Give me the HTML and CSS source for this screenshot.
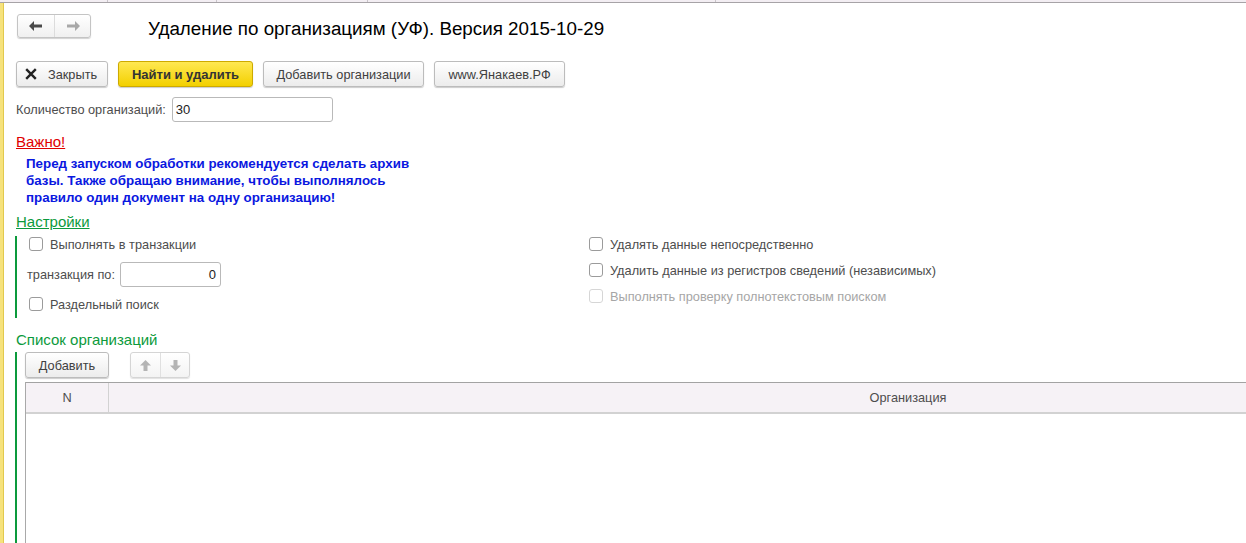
FILE: index.html
```html
<!DOCTYPE html>
<html lang="ru">
<head>
<meta charset="utf-8">
<title>Удаление по организациям</title>
<link rel="stylesheet" href="styles.css">
</head>
<body>
<div class="tabs">
  <div class="tab t1"></div><div class="tab t2"></div><div class="tab t3"></div><div class="tab t4"></div><div class="tab t5"></div>
</div>
<div class="page">
  <div class="edge"></div>
  <div class="content">
    <div class="head">
      <div class="nav">
        <span class="nav-btn"><svg width="14" height="10" viewBox="0 0 14 10"><path d="M0 5 L5 0 L5 3.5 L13 3.5 L13 6.5 L5 6.5 L5 10 Z" fill="#4a4a4a"/></svg></span>
        <span class="nav-btn"><svg width="14" height="10" viewBox="0 0 14 10"><path d="M14 5 L9 0 L9 3.5 L1 3.5 L1 6.5 L9 6.5 L9 10 Z" fill="#a8a8a8"/></svg></span>
      </div>
      <h1 class="title">Удаление по организациям (УФ). Версия 2015-10-29</h1>
    </div>

    <div class="toolbar">
      <button class="btn btn-close"><svg width="12" height="12" viewBox="0 0 12 12"><path d="M1.2 1.2 L10.8 10.8 M10.8 1.2 L1.2 10.8" stroke="#222" stroke-width="2.4"/></svg>Закрыть</button>
      <button class="btn btn-main">Найти и удалить</button>
      <button class="btn btn-add">Добавить организации</button>
      <button class="btn btn-site">www.Янакаев.РФ</button>
    </div>

    <div class="field-row">
      <span class="label">Количество организаций:</span>
      <div class="input input-qty">30</div>
    </div>

    <div class="important">Важно!</div>
    <div class="warn">Перед запуском обработки рекомендуется сделать архив<br>базы. Также обращаю внимание, чтобы выполнялось<br>правило один документ на одну организацию!</div>

    <div class="group-title underlined">Настройки</div>
    <div class="group settings">
      <div class="col col-left">
        <label class="check"><span class="box"></span>Выполнять в транзакции</label>
        <div class="field-row tx">
          <span class="label">транзакция по:</span>
          <div class="input input-tx">0</div>
        </div>
        <label class="check"><span class="box"></span>Раздельный поиск</label>
      </div>
      <div class="col col-right">
        <label class="check"><span class="box"></span>Удалять данные непосредственно</label>
        <label class="check"><span class="box"></span>Удалить данные из регистров сведений (независимых)</label>
        <label class="check disabled"><span class="box"></span>Выполнять проверку полнотекстовым поиском</label>
      </div>
    </div>

    <div class="group-title list-title">Список организаций</div>
    <div class="group list">
      <div class="list-bar">
        <button class="btn btn-add-row">Добавить</button>
        <div class="updown">
          <span class="ud-btn"><svg width="11" height="11" viewBox="0 0 11 11"><path d="M5.5 0 L11 5.5 L7.5 5.5 L7.5 11 L3.5 11 L3.5 5.5 L0 5.5 Z" fill="#b4b4b4"/></svg></span>
          <span class="ud-btn"><svg width="11" height="11" viewBox="0 0 11 11"><path d="M5.5 11 L11 5.5 L7.5 5.5 L7.5 0 L3.5 0 L3.5 5.5 L0 5.5 Z" fill="#b4b4b4"/></svg></span>
        </div>
      </div>
      <div class="table">
        <div class="thead">
          <div class="th th-n">N</div>
          <div class="th th-org">Организация</div>
        </div>
        <div class="tbody"></div>
      </div>
    </div>
  </div>
</div>
</body>
</html>
```

FILE: styles.css
```css
* { box-sizing: border-box; }
html, body { margin: 0; padding: 0; height: 100%; overflow: hidden; background: #fff; }
body {
  font-family: "Liberation Sans", Arial, sans-serif;
  font-size: 12.75px;
  color: #4d4d4d;
}
.tabs {
  display: flex;
  height: 3px;
  background: #f3eef3;
  border-bottom: 1px solid #a7a3a7;
}
.tab { height: 2px; border-right: 1px solid #c9c4c9; }
.t1 { width: 108px; }
.t2 { width: 109px; }
.t3 { width: 151px; }
.t4 { width: 348px; }
.t5 { flex: 1; border-right: none; }

.page { display: flex; height: calc(100% - 3px); }
.edge {
  width: 4px;
  background: #f6e27c;
  border-right: 1px solid #e2c94d;
  flex: none;
}
.content { flex: 1; padding-left: 12px; min-width: 0; overflow: hidden; }

.head { display: flex; align-items: center; margin-top: 11px; height: 24px; }
.nav {
  display: flex;
  margin-left: 1px;
  border: 1px solid #c4c4c4;
  border-radius: 3px;
  box-shadow: 0 1px 1px rgba(0,0,0,0.18);
  background: linear-gradient(#ffffff, #f0f0f0);
}
.nav-btn {
  width: 36px; height: 22px;
  display: flex; align-items: center; justify-content: center;
}
.nav-btn + .nav-btn { border-left: 1px solid #dcdcdc; }
.title {
  margin: 5px 0 0 57px;
  font-size: 18.8px;
  font-weight: normal;
  color: #000;
  white-space: nowrap;
  font-family: "Liberation Sans", Arial, sans-serif;
}

.toolbar { display: flex; gap: 10px; margin-top: 23px; height: 26px; }
.btn {
  font-family: "Liberation Sans", Arial, sans-serif;
  font-size: 12.75px;
  color: #404040;
  height: 26px;
  padding: 0 6px;
  white-space: nowrap;
  border: 1px solid #bcbcbc;
  border-radius: 3px;
  background: linear-gradient(#ffffff, #ececec);
  box-shadow: 0 1px 1px rgba(0,0,0,0.2);
  display: inline-flex; align-items: center; justify-content: center;
}
.btn-close { width: 92px; gap: 11px; justify-content: flex-start; padding-left: 8px; }
.btn-main {
  width: 135px;
  font-weight: bold;
  font-size: 13px;
  color: #333;
  background: linear-gradient(#ffe852, #f3d000);
  border-color: #cdaa00;
}
.btn-add { width: 161px; }
.btn-site { width: 131px; }

.field-row { display: flex; align-items: center; gap: 6px; margin-top: 10px; }
.label { color: #4d4d4d; }
.input {
  height: 25px;
  border: 1px solid #b9b9b9;
  border-radius: 3px;
  background: #fff;
  color: #222;
  padding: 0 3px;
  display: flex; align-items: center;
  font-size: 13px;
}
.input-qty { width: 161px; }

.important {
  margin-top: 11px;
  font-size: 15px;
  line-height: 18px;
  color: #e00000;
  text-decoration: underline;
  display: inline-block;
}
.warn {
  margin: 4px 0 0 10px;
  font-weight: bold;
  color: #0a18e0;
  font-size: 13.35px;
  line-height: 17px;
  white-space: nowrap;
}
.group-title {
  font-size: 15px;
  line-height: 18px;
  color: #0c9a3c;
  margin-top: 7px;
  display: inline-block;
}
.group-title.underlined { text-decoration: underline; }
.group { border-left: 2px solid #0c9a3c; margin-left: -1px; }
.settings {
  display: flex;
  margin-top: 5px;
  padding: 1px 0 7px 10px;
}
.col { display: flex; flex-direction: column; }
.col-left { width: 562px; }
.check {
  display: flex; align-items: center; gap: 7px;
  color: #4d4d4d;
  height: 14px;
  white-space: nowrap;
}
.box {
  width: 14px; height: 14px;
  border: 1px solid #9b9b9b;
  border-radius: 3px;
  background: #fff;
  flex: none;
}
.col-left .check { margin-left: 2px; }
.tx { margin-top: 11px; gap: 5px; }
.input-tx { width: 101px; height: 25px; justify-content: flex-end; padding-right: 4px; }
.col-left .check:last-child { margin-top: 10px; }
.col-right .check + .check { margin-top: 12px; }
.check.disabled { color: #a6a6a6; }
.check.disabled .box { border-color: #d6d6d6; }

.list-title { margin-top: 13px; }
.group-title + .list { margin-top: 3px; }
.list { padding-left: 8px; height: 200px; }
.list-bar { display: flex; align-items: center; gap: 21px; height: 26px; }
.btn-add-row { width: 84px; padding: 0; }
.updown {
  display: flex;
  border: 1px solid #d5d5d5;
  border-radius: 3px;
  background: linear-gradient(#ffffff, #f3f3f3);
  box-shadow: 0 1px 1px rgba(0,0,0,0.12);
}
.ud-btn { width: 29px; height: 24px; display: flex; align-items: center; justify-content: center; }
.ud-btn + .ud-btn { border-left: 1px solid #e0e0e0; }

.table {
  margin-top: 4px;
  border-left: 1px solid #a9a9a9;
  height: 200px;
}
.thead {
  display: flex;
  width: 1700px;
  height: 32px;
  background: #f6f2f6;
  border-top: 1px solid #a3a3a3;
  border-bottom: 2px solid #d2d2d2;
}
.th { display: flex; align-items: center; justify-content: center; color: #4d4d4d; }
.th-n { width: 83px; border-right: 1px solid #d2d2d2; flex: none; }
.th-org { width: 1598px; flex: none; }
```
